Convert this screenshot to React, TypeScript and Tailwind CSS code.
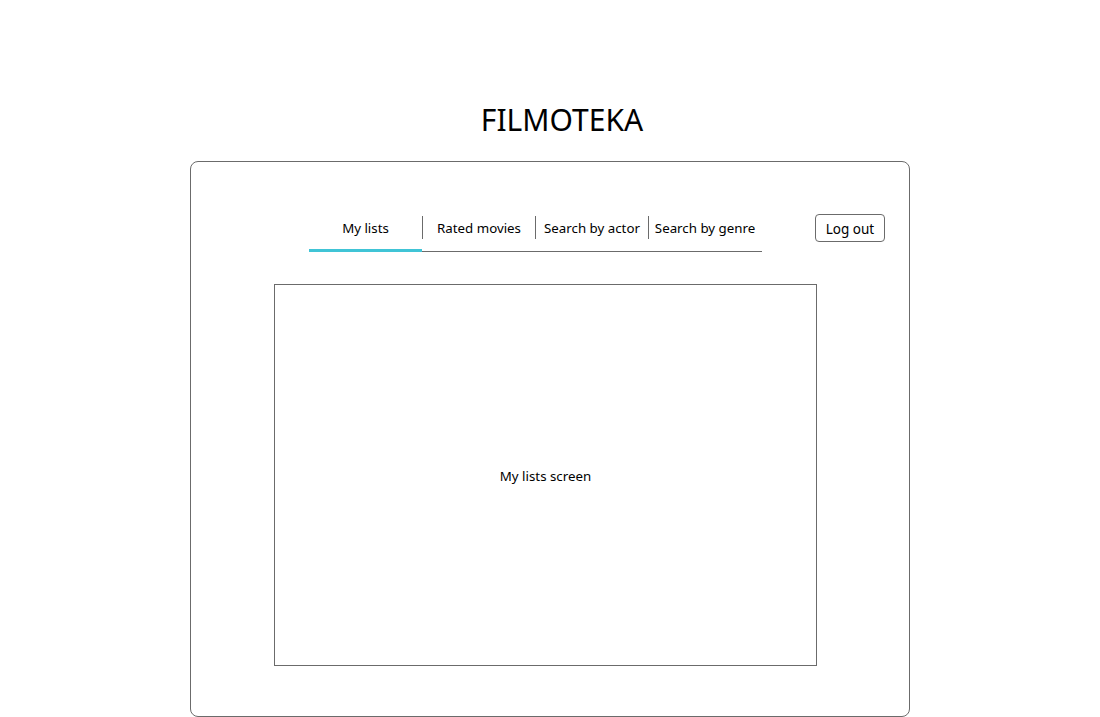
const tabs = ["My lists", "Rated movies", "Search by actor", "Search by genre"];

export default function App() {
  const active = 0;

  return (
    <div className="min-h-[717px] bg-white text-black font-['Noto_Sans',sans-serif]">
      <div className="pt-[98px] pl-[24px] flex justify-center">
        <h1 className="text-[30px] leading-[43px] font-normal">FILMOTEKA</h1>
      </div>

      <div className="ml-[190px] mt-[20px] w-[720px] h-[556px] border border-[#6b6b6b] rounded-[8px]">
        <div className="flex items-start pt-[52px]">
          <div className="ml-[118px] w-[453px] flex items-end border-b border-[#6b6b6b]">
            {tabs.map((tab, i) => (
              <div key={tab} className="w-[113px] flex flex-col pt-[2px]">
                <div
                  className={
                    "h-[23px] pt-[2px] flex items-center justify-center text-[13.3px] " +
                    (i > 0 ? "border-l border-[#6b6b6b]" : "")
                  }
                >
                  {tab}
                </div>
                <div className="h-[10px]" />
                {i === active ? (
                  <div className="h-[3px] -mb-px bg-[#40c4d6]" />
                ) : (
                  <div className="h-[2px]" />
                )}
              </div>
            ))}
          </div>

          <button className="ml-[53px] w-[70px] h-[28px] border border-[#6b6b6b] rounded-[4px] text-[13.5px] leading-none pt-[3px]">
            Log out
          </button>
        </div>

        <div className="ml-[83px] mt-[32px] w-[543px] h-[382px] pt-[3px] border border-[#6b6b6b] flex items-center justify-center">
          <span className="text-[13.3px]">My lists screen</span>
        </div>
      </div>
    </div>
  );
}
